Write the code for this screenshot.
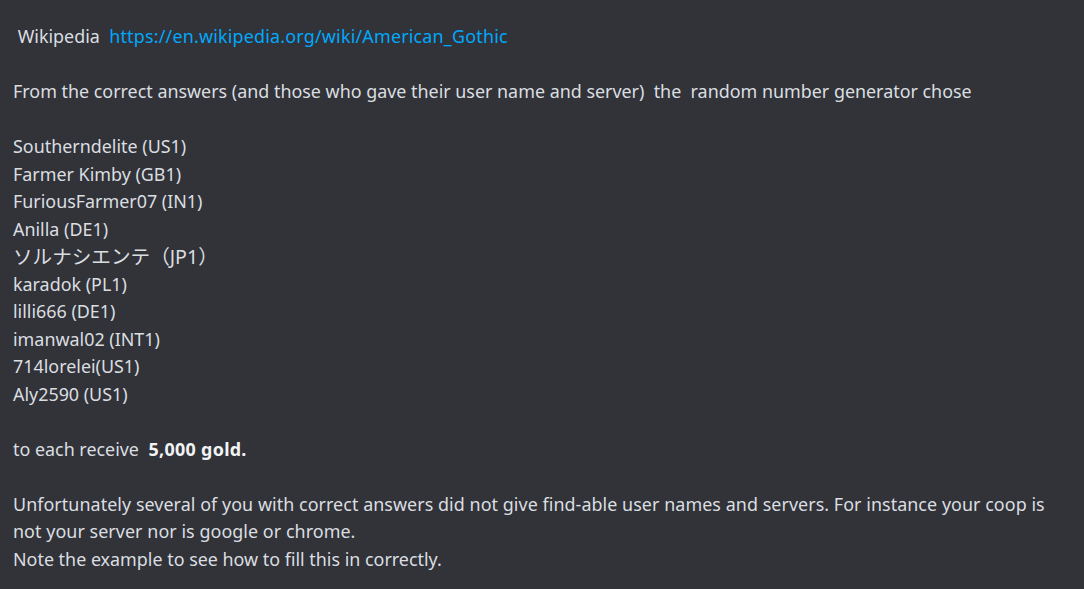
export default function App() {
  const players = [
    'Southerndelite (US1)',
    'Farmer Kimby (GB1)',
    'FuriousFarmer07 (IN1)',
    'Anilla (DE1)',
    'ソルナシエンテ（JP1）',
    'karadok (PL1)',
    'lilli666 (DE1)',
    'imanwal02 (INT1)',
    '714lorelei(US1)',
    'Aly2590 (US1)',
  ]

  return (
    <div className="min-h-[589px] w-full bg-[#313338] pt-[23px]">
      <div
        className="w-[1062px] whitespace-pre-wrap pl-[13px] text-[17.9px] leading-[27.5px] text-[#dbdee1]"
        style={{ fontFamily: '"Noto Sans", "Noto Sans CJK JP", sans-serif' }}
      >
        <div>
          {' Wikipedia  '}
          <a href="#" className="tracking-[0.2px] text-[#00a8fc]">
            https://en.wikipedia.org/wiki/American_Gothic
          </a>
        </div>
        <div>&nbsp;</div>
        <div>From the correct answers (and those who gave their user name and server)  the  random number generator chose</div>
        <div>&nbsp;</div>
        {players.map((p) =>
          p.startsWith('ソ') ? (
            <div key={p} className="text-[19.6px]">
              {p}
            </div>
          ) : (
            <div key={p}>{p}</div>
          )
        )}
        <div>&nbsp;</div>
        <div>
          to each receive <span className="font-bold tracking-[0.3px] text-[#f2f3f5]"> 5,000 gold.</span>
        </div>
        <div>&nbsp;</div>
        <div className="tracking-[0.06px]">
          Unfortunately several of you with correct answers did not give find-able user names and servers. For instance your coop is not your server nor is google or chrome.
        </div>
        <div>Note the example to see how to fill this in correctly.</div>
      </div>
    </div>
  )
}
